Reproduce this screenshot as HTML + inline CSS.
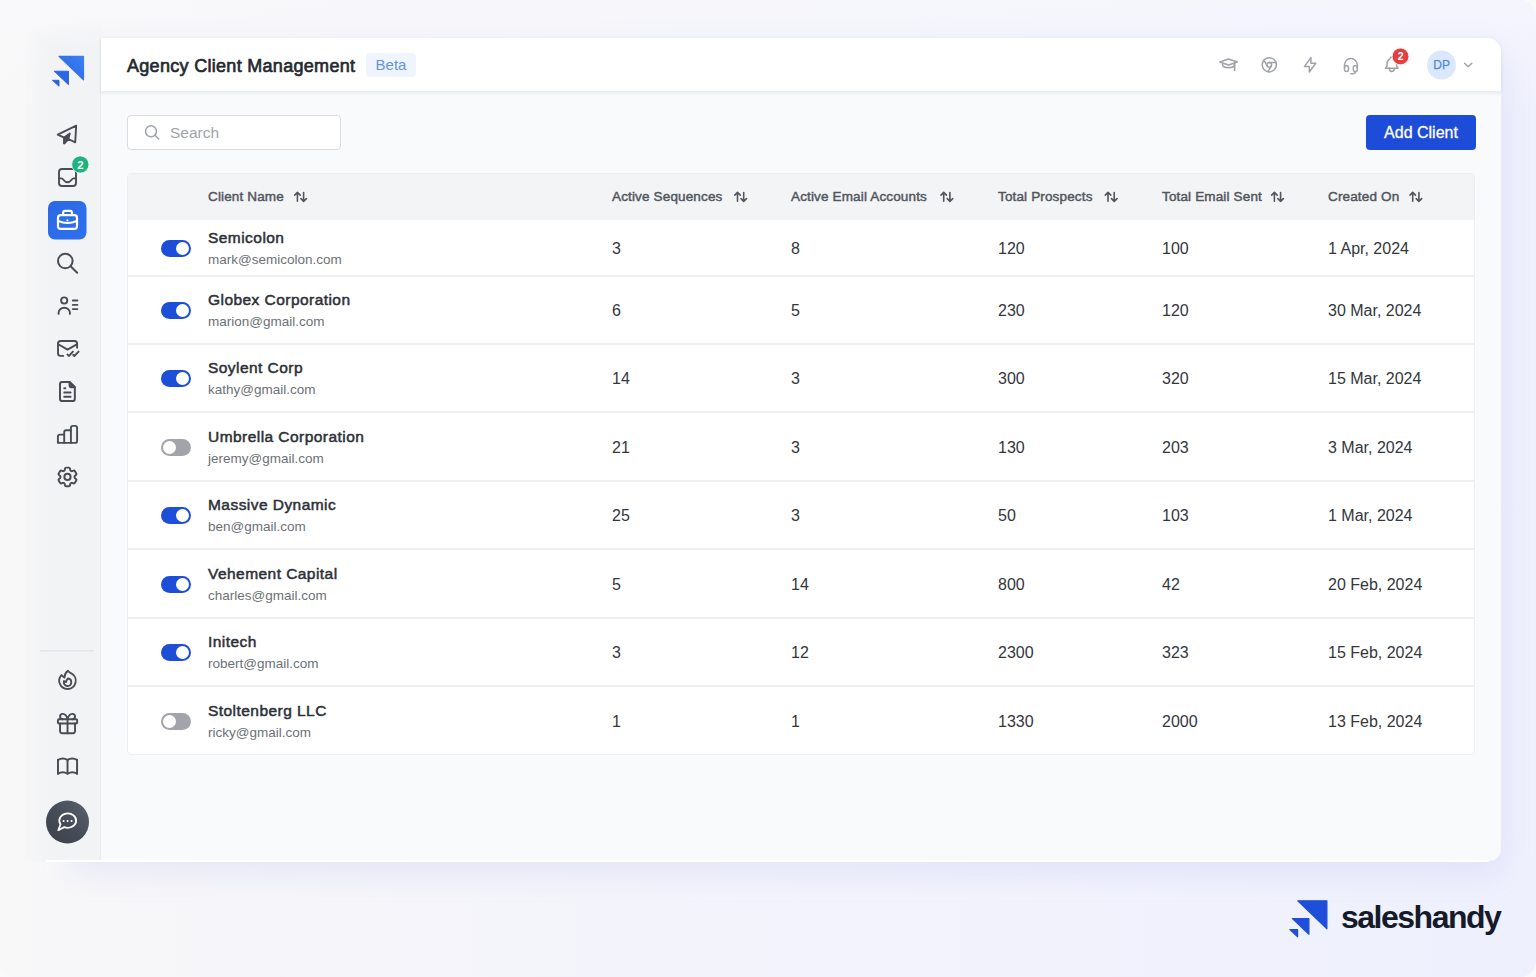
<!DOCTYPE html>
<html><head><meta charset="utf-8"><style>
*{box-sizing:border-box;margin:0;padding:0}
html,body{width:1536px;height:977px;overflow:hidden}
body{font-family:"Liberation Sans",sans-serif;background:#f9f9fb;position:relative;color:#1f2937}
.frame{left:0;top:0;width:1536px;height:977px;border-radius:16px;background:linear-gradient(180deg,rgba(250,250,252,.55) 0%,rgba(250,250,252,0) 12%),linear-gradient(90deg,#f8f8f9 0%,#f5f5fa 22%,#f2f3fc 55%,#eef0fd 100%)}
div{position:absolute}
.card{left:70px;top:38px;width:1431px;height:823px;background:#f9fafb;border-radius:0 14px 12px 0;box-shadow:0 12px 30px rgba(165,168,235,.20)}
.cline{left:46px;top:860px;width:1443px;height:1.5px;background:#fff}
.sclip{left:0;top:0;width:101px;height:861px;overflow:hidden}
.sblur{left:37px;top:35px;width:120px;height:900px;background:#f2f3f5;filter:blur(6px)}
.sbord{left:100px;top:38px;width:1px;height:823px;background:#eaebee}
.hdr{left:101px;top:38px;width:1400px;height:53px;background:#fff;border-top-right-radius:14px;box-shadow:0 1px 4px rgba(0,0,0,.07)}
.title{left:127px;top:56px;font-size:18px;letter-spacing:0.3px;-webkit-text-stroke:0.65px #24282f;color:#24282f;white-space:nowrap}
.beta{left:366px;top:53px;width:50px;height:24px;background:#eef5fe;border-radius:4px;color:#6892de;font-size:15px;text-align:center;line-height:24px}
.search{left:127px;top:115px;width:214px;height:35px;background:#fff;border:1px solid #dadce1;border-radius:4px}
.stxt{left:170px;top:124px;font-size:15.5px;color:#a0a4a9}
.btn{left:1366px;top:115px;width:110px;height:35px;background:#1d4cd8;border-radius:4px;color:#fff;-webkit-text-stroke:0.3px #fff;font-size:16px;text-align:center;line-height:35px}
.tbl{left:127px;top:173px;width:1348px;height:582px;background:#fff;border:1px solid #eceef1;border-radius:4px}
.th{left:128px;top:174px;width:1346px;height:46px;background:#f3f4f6}
.h{top:189px;font-size:13.5px;letter-spacing:0.15px;-webkit-text-stroke:0.45px #51565d;color:#51565d;white-space:nowrap}
.sep{left:128px;width:1346px;height:2px;background:#eff0f2}
.n{left:208px;font-size:15.5px;letter-spacing:0.45px;-webkit-text-stroke:0.5px #2c3037;color:#2c3037;white-space:nowrap}
.e{left:208px;font-size:13.5px;color:#6c7177;white-space:nowrap}
.c{font-size:16px;color:#33373d;white-space:nowrap}
.tg{left:161px;width:30px;height:17px;border-radius:9px;background:#1d4ed8}
.tg::after{content:"";position:absolute;right:2px;top:2px;width:13px;height:13px;border-radius:50%;background:#fff}
.tg.off{background:#a1a4ab}
.tg.off::after{left:2px;right:auto}
svg{position:absolute;overflow:visible}
.ic{stroke:#484d55;stroke-width:2;fill:none;stroke-linecap:round;stroke-linejoin:round}
.hi{stroke:#9fa3a9;stroke-width:1.6;fill:none;stroke-linecap:round;stroke-linejoin:round}

.hband{left:101px;top:91px;width:1400px;height:4px;background:linear-gradient(180deg,#ebecee 0%,rgba(249,250,251,0) 100%)}

</style></head><body>
<div class="frame"></div>
<div class="card"></div>
<div class="sclip"><div class="sblur"></div></div>
<div class="sbord"></div>
<div class="cline"></div>
<div class="hdr"></div>
<div class="hband"></div>
<div class="title">Agency Client Management</div>
<div class="beta">Beta</div>
<div class="search"></div>
<div class="stxt">Search</div>
<div class="btn">Add Client</div>
<div class="tbl"></div>
<div class="th"></div>
<div class="h" style="left:208px">Client Name</div>
<div class="h" style="left:612px">Active Sequences</div>
<div class="h" style="left:791px">Active Email Accounts</div>
<div class="h" style="left:998px">Total Prospects</div>
<div class="h" style="left:1162px">Total Email Sent</div>
<div class="h" style="left:1328px">Created On</div>
<div class="tg" style="top:239.5px"></div><div class="n" style="top:229px">Semicolon</div><div class="e" style="top:252px">mark@semicolon.com</div><div class="c" style="left:612px;top:240px">3</div><div class="c" style="left:791px;top:240px">8</div><div class="c" style="left:998px;top:240px">120</div><div class="c" style="left:1162px;top:240px">100</div><div class="c" style="left:1328px;top:240px">1 Apr, 2024</div>
<div class="tg" style="top:301.5px"></div><div class="n" style="top:291px">Globex Corporation</div><div class="e" style="top:314px">marion@gmail.com</div><div class="c" style="left:612px;top:302px">6</div><div class="c" style="left:791px;top:302px">5</div><div class="c" style="left:998px;top:302px">230</div><div class="c" style="left:1162px;top:302px">120</div><div class="c" style="left:1328px;top:302px">30 Mar, 2024</div>
<div class="tg" style="top:369.5px"></div><div class="n" style="top:359px">Soylent Corp</div><div class="e" style="top:382px">kathy@gmail.com</div><div class="c" style="left:612px;top:370px">14</div><div class="c" style="left:791px;top:370px">3</div><div class="c" style="left:998px;top:370px">300</div><div class="c" style="left:1162px;top:370px">320</div><div class="c" style="left:1328px;top:370px">15 Mar, 2024</div>
<div class="tg off" style="top:438.5px"></div><div class="n" style="top:428px">Umbrella Corporation</div><div class="e" style="top:451px">jeremy@gmail.com</div><div class="c" style="left:612px;top:439px">21</div><div class="c" style="left:791px;top:439px">3</div><div class="c" style="left:998px;top:439px">130</div><div class="c" style="left:1162px;top:439px">203</div><div class="c" style="left:1328px;top:439px">3 Mar, 2024</div>
<div class="tg" style="top:506.5px"></div><div class="n" style="top:496px">Massive Dynamic</div><div class="e" style="top:519px">ben@gmail.com</div><div class="c" style="left:612px;top:507px">25</div><div class="c" style="left:791px;top:507px">3</div><div class="c" style="left:998px;top:507px">50</div><div class="c" style="left:1162px;top:507px">103</div><div class="c" style="left:1328px;top:507px">1 Mar, 2024</div>
<div class="tg" style="top:575.5px"></div><div class="n" style="top:565px">Vehement Capital</div><div class="e" style="top:588px">charles@gmail.com</div><div class="c" style="left:612px;top:576px">5</div><div class="c" style="left:791px;top:576px">14</div><div class="c" style="left:998px;top:576px">800</div><div class="c" style="left:1162px;top:576px">42</div><div class="c" style="left:1328px;top:576px">20 Feb, 2024</div>
<div class="tg" style="top:643.5px"></div><div class="n" style="top:633px">Initech</div><div class="e" style="top:656px">robert@gmail.com</div><div class="c" style="left:612px;top:644px">3</div><div class="c" style="left:791px;top:644px">12</div><div class="c" style="left:998px;top:644px">2300</div><div class="c" style="left:1162px;top:644px">323</div><div class="c" style="left:1328px;top:644px">15 Feb, 2024</div>
<div class="tg off" style="top:712.5px"></div><div class="n" style="top:702px">Stoltenberg LLC</div><div class="e" style="top:725px">ricky@gmail.com</div><div class="c" style="left:612px;top:713px">1</div><div class="c" style="left:791px;top:713px">1</div><div class="c" style="left:998px;top:713px">1330</div><div class="c" style="left:1162px;top:713px">2000</div><div class="c" style="left:1328px;top:713px">13 Feb, 2024</div>
<div class="sep" style="top:275px"></div><div class="sep" style="top:343px"></div><div class="sep" style="top:411px"></div><div class="sep" style="top:480px"></div><div class="sep" style="top:548px"></div><div class="sep" style="top:617px"></div><div class="sep" style="top:685px"></div><svg width="1536" height="977" viewBox="0 0 1536 977" style="left:0;top:0">
<defs>
<linearGradient id="lg1" x1="0" y1="1" x2="1" y2="0"><stop offset="0" stop-color="#2a5fe0"/><stop offset="1" stop-color="#3c82f4"/></linearGradient>
<linearGradient id="bb" x1="0" y1="0" x2="1" y2="1"><stop offset="0" stop-color="#2b68e6"/><stop offset="1" stop-color="#2f70ee"/></linearGradient>
<linearGradient id="chat" x1="1" y1="0" x2="0" y2="1"><stop offset="0" stop-color="#5b6371"/><stop offset="0.5" stop-color="#474d58"/><stop offset="1" stop-color="#3a3f49"/></linearGradient>
</defs>
<!-- sidebar logo -->
<path d="M59,56.3 L83.5,56.3 L83.5,79.8 Z" fill="url(#lg1)" stroke="url(#lg1)" stroke-width="1.2" stroke-linejoin="round"/>
<path d="M54.4,71.2 L68.4,71.2 L68.4,84.4 Z" fill="#2d66e4" stroke="#2d66e4" stroke-width="1.1" stroke-linejoin="round"/>
<path d="M52.4,80.3 L59,80.3 L59,86.2 Z" fill="#2a5fe0" stroke="#2a5fe0" stroke-width="0.9" stroke-linejoin="round"/>
<!-- send -->
<g class="ic" style="stroke-width:1.9">
<path d="M57.7,134.6 L76.2,125.7 L75.2,142.3 L68.3,139 L64.2,143.3 L64.2,137.6 Z"/>
<path d="M64.2,137.6 L69.8,133.6 L68.3,139 L64.2,143.3 Z" fill="#484d55"/>
</g>
<!-- inbox -->
<g class="ic" style="stroke-width:1.9">
<rect x="59" y="169" width="17" height="17" rx="3"/>
<path d="M59,178.4 H61.5 C63.6,178.4 63.9,182.3 67.5,182.3 C71.1,182.3 71.4,178.4 73.5,178.4 H76"/>
</g>
<circle cx="80.3" cy="164.5" r="8.6" fill="#1cb37c" stroke="#f3f4f6" stroke-width="0.8"/>
<text x="80.4" y="168.7" font-family="Liberation Sans" font-weight="bold" font-size="11.5" fill="#fff" text-anchor="middle">2</text>
<!-- active briefcase -->
<rect x="48" y="201" width="38.5" height="38.5" rx="7" fill="url(#bb)"/>
<g stroke="#fff" stroke-width="2.2" fill="none" stroke-linecap="round" stroke-linejoin="round">
<rect x="58" y="215.1" width="19" height="13.7" rx="2.6"/>
<path d="M63.2,215 V212.6 a1.8,1.8 0 0 1 1.8,-1.8 H70.2 a1.8,1.8 0 0 1 1.8,1.8 V215"/>
<path d="M58.2,221 Q67.5,225 76.8,221"/>
</g>
<circle cx="67.4" cy="220.3" r="1.1" fill="#fff"/>
<!-- search -->
<g class="ic" style="stroke-width:2">
<circle cx="65.3" cy="261" r="7.3"/>
<path d="M70.6,266.3 L77.2,272.7"/>
</g>
<!-- contacts -->
<g class="ic" style="stroke-width:1.9">
<circle cx="64.2" cy="300.5" r="3.1"/>
<path d="M58.6,313.9 V312.6 a5.65,4.8 0 0 1 11.3,0 V313.9"/>
<path d="M72.8,300.5 H77.4 M72.8,304.9 H77.4 M72.8,309.1 H77.4"/>
</g>
<!-- mail check -->
<g class="ic" style="stroke-width:1.9">
<path d="M63.2,355.9 H60.6 a2.6,2.6 0 0 1 -2.6,-2.6 V343.6 a2.6,2.6 0 0 1 2.6,-2.6 H74.5 a2.6,2.6 0 0 1 2.6,2.6 V347.8"/>
<path d="M58.3,344.3 L67.5,349.6 L76.8,344.3"/>
<path d="M67.4,354.6 L69.1,355.9 L72.9,351.6"/>
<path d="M73.2,355.0 L74.3,356 L78.6,351.6"/>
</g>
<!-- document -->
<g transform="translate(54.7,378.8) scale(1.06)" class="ic" style="stroke-width:1.85">
<path d="M17 21h-10a2 2 0 0 1 -2 -2v-14a2 2 0 0 1 2 -2h7l5 5v11a2 2 0 0 1 -2 2z"/>
<path d="M14 3v3a2 2 0 0 0 2 2h3 Z" fill="#484d55"/>
<path d="M9 9h1 M9 13h6 M9 17h6"/>
</g>
<!-- chart -->
<g class="ic" style="stroke-width:1.9">
<path d="M57.9,442.9 V436.6 a2,2 0 0 1 2,-2 H64.2 V432.2 a2,2 0 0 1 2,-2 H70.9 V427.9 a2,2 0 0 1 2,-2 H75.1 a2,2 0 0 1 2,2 V440.9 a2,2 0 0 1 -2,2 H59.9 a2,2 0 0 1 -2,-2 Z"/>
<path d="M64.2,434.6 V442.9 M70.9,430.2 V442.9"/>
</g>
<!-- gear (heroicons cog-6-tooth) -->
<g transform="translate(55,464.5) scale(1.04)" class="ic" style="stroke-width:1.9">
<path d="M9.594 3.94c.09-.542.56-.94 1.11-.94h2.593c.55 0 1.02.398 1.11.94l.213 1.281c.063.374.313.686.645.87.074.04.147.083.22.127.325.196.72.257 1.075.124l1.217-.456a1.125 1.125 0 0 1 1.37.49l1.296 2.247a1.125 1.125 0 0 1-.26 1.431l-1.003.827c-.293.241-.438.613-.43.992a7.723 7.723 0 0 1 0 .255c-.008.378.137.75.43.991l1.004.827c.424.35.534.955.26 1.43l-1.298 2.247a1.125 1.125 0 0 1-1.369.491l-1.217-.456c-.355-.133-.75-.072-1.076.124a6.47 6.47 0 0 1-.22.128c-.331.183-.581.495-.644.869l-.213 1.281c-.09.543-.56.94-1.110.94h-2.594c-.55 0-1.019-.398-1.110-.94l-.213-1.281c-.062-.374-.312-.686-.644-.87a6.52 6.52 0 0 1-.22-.127c-.325-.196-.72-.257-1.076-.124l-1.217.456a1.125 1.125 0 0 1-1.369-.49l-1.297-2.247a1.125 1.125 0 0 1 .26-1.431l1.004-.827c.292-.24.437-.613.43-.991a6.932 6.932 0 0 1 0-.255c.007-.38-.138-.751-.43-.992l-1.004-.827a1.125 1.125 0 0 1-.26-1.43l1.297-2.247a1.125 1.125 0 0 1 1.37-.491l1.216.456c.356.133.751.072 1.076-.124.072-.044.146-.086.22-.128.332-.183.582-.495.644-.869l.214-1.28Z"/>
<path d="M15 12a3 3 0 1 1-6 0 3 3 0 0 1 6 0Z"/>
</g>
<!-- divider -->
<rect x="40" y="650" width="54" height="1.5" fill="#e3e5e9"/>
<!-- fire (heroicons) -->
<g transform="translate(55.5,668) scale(1.0)" class="ic" style="stroke-width:1.9">
<path d="M15.362 5.214A8.252 8.252 0 0 1 12 21 8.25 8.25 0 0 1 6.038 7.047 8.287 8.287 0 0 0 9 9.601a8.983 8.983 0 0 1 3.361-6.867 8.21 8.21 0 0 0 3 2.48Z"/>
<path d="M12 18a3.75 3.75 0 0 0 .495-7.468 5.99 5.99 0 0 0-1.925 3.547 5.975 5.975 0 0 1-2.133-1.001A3.75 3.75 0 0 0 12 18Z"/>
</g>
<!-- gift (tabler) -->
<g transform="translate(54.7,710.7) scale(1.07)" class="ic" style="stroke-width:1.8">
<path d="M3 9a1 1 0 0 1 1 -1h16a1 1 0 0 1 1 1v2a1 1 0 0 1 -1 1h-16a1 1 0 0 1 -1 -1z"/>
<path d="M12 8l0 13"/>
<path d="M19 12v7a2 2 0 0 1 -2 2h-10a2 2 0 0 1 -2 -2v-7"/>
<path d="M7.5 8a2.5 2.5 0 0 1 0 -5a4.8 8 0 0 1 4.5 5a4.8 8 0 0 1 4.5 -5a2.5 2.5 0 0 1 0 5"/>
</g>
<!-- book (tabler) -->
<g transform="translate(54.8,753.5) scale(1.06)" class="ic" style="stroke-width:1.85">
<path d="M3 19a9 9 0 0 1 9 0a9 9 0 0 1 9 0"/>
<path d="M3 6a9 9 0 0 1 9 0a9 9 0 0 1 9 0"/>
<path d="M3 6l0 13 M12 6l0 13 M21 6l0 13"/>
</g>
<!-- chat button -->
<circle cx="67.5" cy="822" r="21.5" fill="url(#chat)"/>
<path d="M60.5,824.2 L58.3,830.2 L64.25,827.1 A8.4,7.2 0 1 0 60.5,824.2 Z" stroke="#fff" stroke-width="1.8" fill="none" stroke-linejoin="round"/>
<circle cx="63.6" cy="821" r="1.05" fill="#fff"/><circle cx="67.6" cy="821" r="1.05" fill="#fff"/><circle cx="71.6" cy="821" r="1.05" fill="#fff"/>
<!-- search box icon -->
<g class="hi" style="stroke-width:1.5">
<circle cx="151" cy="131.3" r="5.5"/>
<path d="M155,135.3 L158.8,139"/>
</g>
<!-- header icons -->
<g class="hi">
<path d="M1219.8,62 L1228.5,59 L1237.4,62 L1228.5,65 Z"/>
<path d="M1222.6,63.6 V65 C1222.6,66.8 1225.2,67.6 1228.5,67.6 C1231.8,67.6 1234.4,66.8 1234.4,65 V63.6"/>
<path d="M1234.6,62.8 V70.4"/>
</g>
<g transform="translate(1259.8,55.3) scale(0.79)" class="hi" style="stroke-width:1.9">
<circle cx="12" cy="12" r="9"/><circle cx="12" cy="12" r="3"/>
<path d="M12 9h8.4 M14.598 13.5l-4.2 7.275 M9.402 13.5l-4.2 -7.275"/>
</g>
<g transform="translate(1300.5,55.2) scale(0.8)" class="hi" style="stroke-width:1.9">
<path d="M13 3v7h6l-8 11v-7h-6l8 -11"/>
</g>
<g transform="translate(1341.3,56.2) scale(0.8)" class="hi" style="stroke-width:1.9">
<path d="M4 14v-3a8 8 0 1 1 16 0v3"/>
<path d="M18 19c0 1.657 -2.686 3 -6 3"/>
<path d="M4 14a2 2 0 0 1 2 -2h1a2 2 0 0 1 2 2v3a2 2 0 0 1 -2 2h-1a2 2 0 0 1 -2 -2v-3z"/>
<path d="M15 14a2 2 0 0 1 2 -2h1a2 2 0 0 1 2 2v3a2 2 0 0 1 -2 2h-1a2 2 0 0 1 -2 -2v-3z"/>
</g>
<g transform="translate(1382.2,54.6) scale(0.8)" class="hi" style="stroke-width:1.9">
<path d="M10 5a2 2 0 1 1 4 0a7 7 0 0 1 4 6v3a4 4 0 0 0 2 3h-16a4 4 0 0 0 2 -3v-3a7 7 0 0 1 4 -6"/>
<path d="M9 17v1a3 3 0 0 0 6 0v-1"/>
</g>
<circle cx="1400.5" cy="56.4" r="8.4" fill="#e53e3e" stroke="#fff" stroke-width="0.8"/>
<text x="1400.6" y="60.4" font-family="Liberation Sans" font-weight="bold" font-size="10.5" fill="#fff" text-anchor="middle">2</text>
<circle cx="1441.5" cy="65" r="14.5" fill="#dbe8fc"/>
<text x="1441.6" y="69.3" font-family="Liberation Sans" font-size="12" fill="#5487dc" stroke="#5487dc" stroke-width="0.25" text-anchor="middle">DP</text>
<path d="M1464.6,63.2 L1468.2,66.8 L1471.8,63.2" class="hi" style="stroke-width:1.4"/>
<!-- sort icons -->
<g stroke="#51565d" stroke-width="1.6" fill="none" stroke-linecap="round" stroke-linejoin="round">
<path transform="translate(294.7,0)" d="M2.7,192.6 V201.2 M0,195.1 L2.7,192.4 L5.5,195.1 M8.9,192.6 V201.2 M6.2,198.6 L8.9,201.4 L11.7,198.6"/>
<path transform="translate(734.8,0)" d="M2.7,192.6 V201.2 M0,195.1 L2.7,192.4 L5.5,195.1 M8.9,192.6 V201.2 M6.2,198.6 L8.9,201.4 L11.7,198.6"/>
<path transform="translate(941,0)" d="M2.7,192.6 V201.2 M0,195.1 L2.7,192.4 L5.5,195.1 M8.9,192.6 V201.2 M6.2,198.6 L8.9,201.4 L11.7,198.6"/>
<path transform="translate(1105.3,0)" d="M2.7,192.6 V201.2 M0,195.1 L2.7,192.4 L5.5,195.1 M8.9,192.6 V201.2 M6.2,198.6 L8.9,201.4 L11.7,198.6"/>
<path transform="translate(1271.7,0)" d="M2.7,192.6 V201.2 M0,195.1 L2.7,192.4 L5.5,195.1 M8.9,192.6 V201.2 M6.2,198.6 L8.9,201.4 L11.7,198.6"/>
<path transform="translate(1410,0)" d="M2.7,192.6 V201.2 M0,195.1 L2.7,192.4 L5.5,195.1 M8.9,192.6 V201.2 M6.2,198.6 L8.9,201.4 L11.7,198.6"/>
</g>
<!-- bottom logo -->
<g fill="#1f4fd8" stroke="#1f4fd8" stroke-width="1.2" stroke-linejoin="round">
<path d="M1297.8,900.8 L1326.9,900.8 L1326.9,928.8 Z"/>
<path d="M1292.4,918.5 L1308.9,918.5 L1308.9,934.2 Z"/>
<path d="M1289.9,929.5 L1297.6,929.5 L1297.6,936.8 Z"/>
</g>
<text x="1341" y="928.3" font-family="Liberation Sans" font-weight="bold" font-size="32" fill="#161b2c" letter-spacing="-1.5">saleshandy</text>
</svg>

</body></html>
